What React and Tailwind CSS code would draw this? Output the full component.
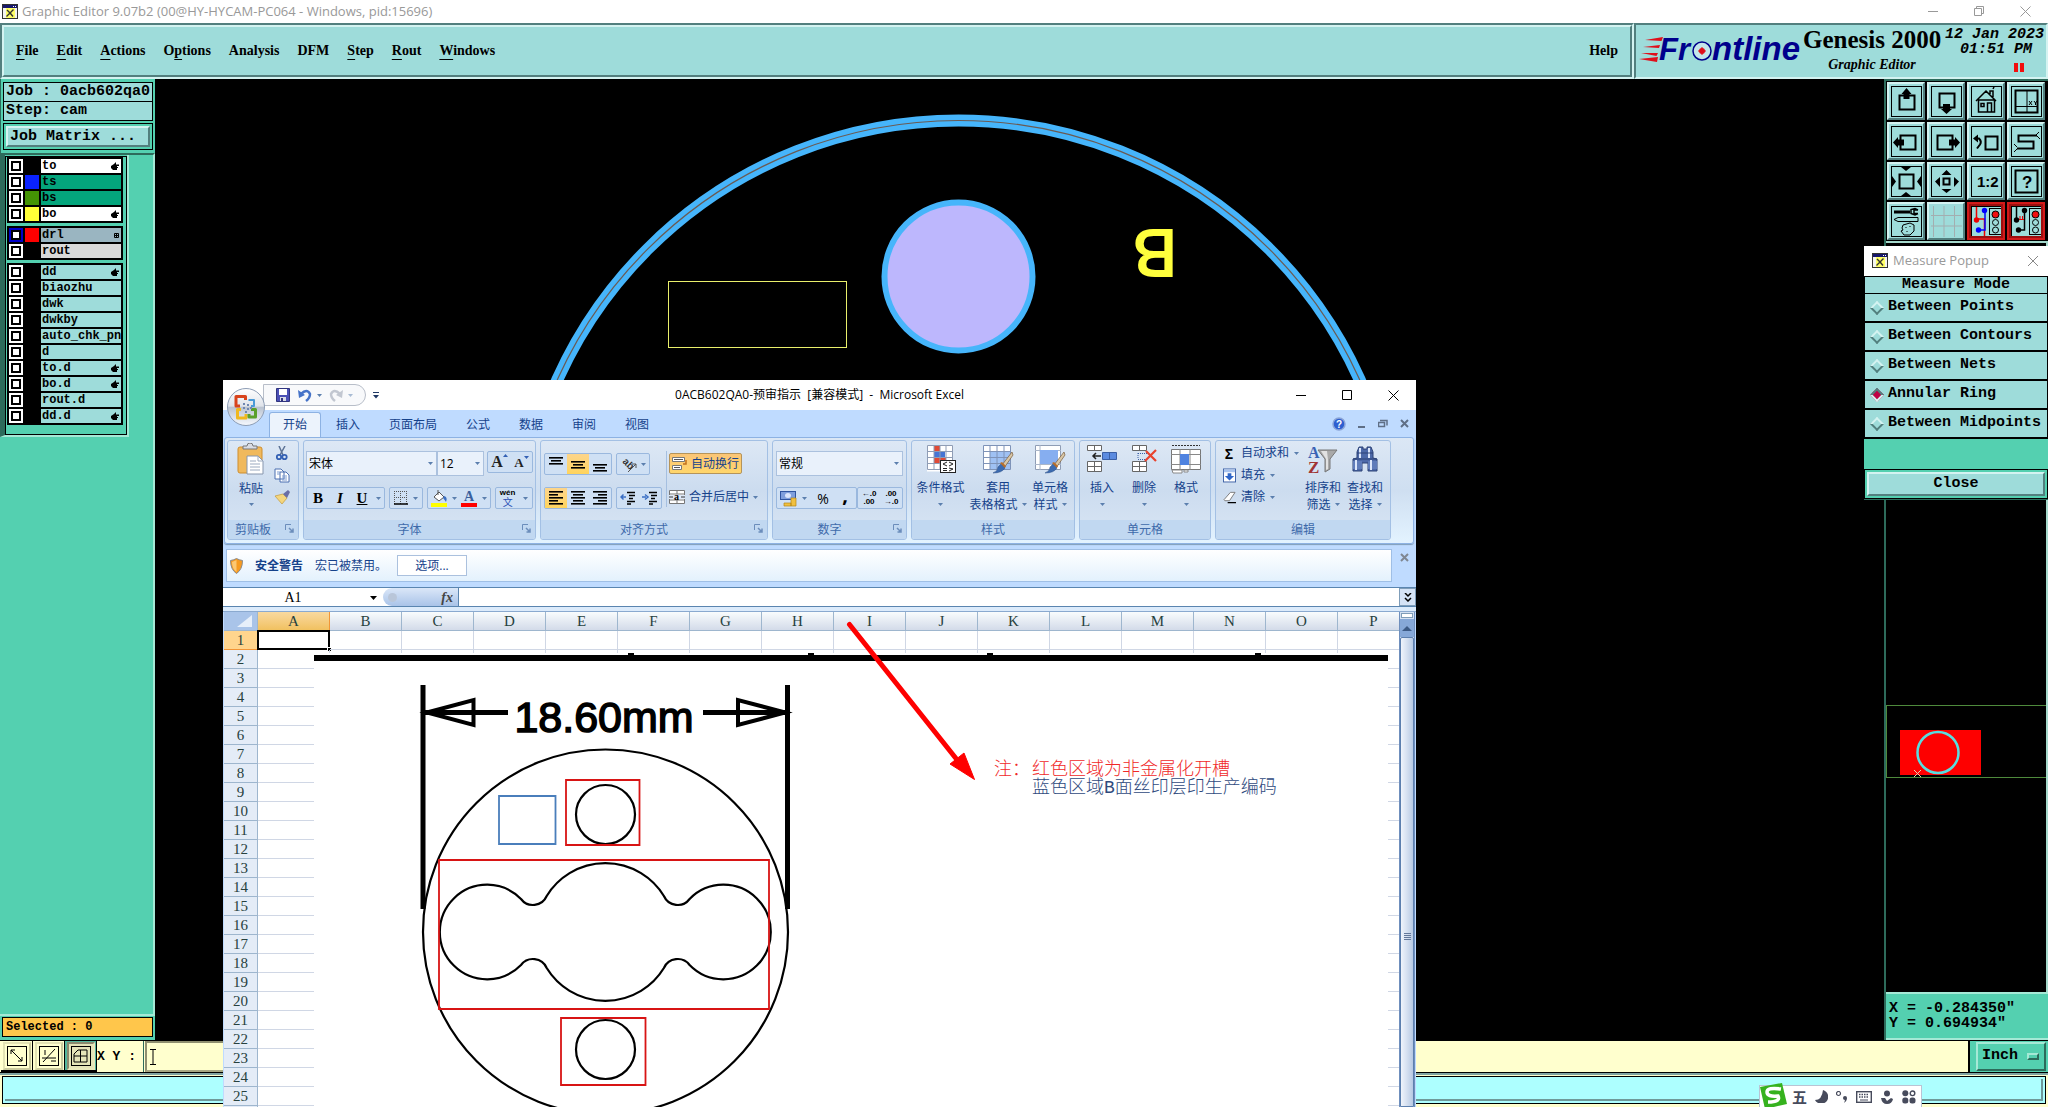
import { useState } from 'react';
import clsx from 'clsx';

const raised = 'border-2 border-t-[#d4f3f1] border-l-[#d4f3f1] border-b-[#527f7e] border-r-[#527f7e]';
const sunken = 'border-2 border-t-[#527f7e] border-l-[#527f7e] border-b-[#d4f3f1] border-r-[#d4f3f1]';

const menus = [
  ['', 'F', 'ile'],
  ['', 'E', 'dit'],
  ['', 'A', 'ctions'],
  ['O', 'p', 'tions'],
  ['Analysis', '', ''],
  ['DFM', '', ''],
  ['', 'S', 'tep'],
  ['', 'R', 'out'],
  ['', 'W', 'indows'],
];

const layerGroups = [
  [
    { name: 'to', color: 'bg-black', row: 'bg-white', hand: true },
    { name: 'ts', color: 'bg-[#0a22ff]', row: 'bg-[#04a57c]' },
    { name: 'bs', color: 'bg-[#449404]', row: 'bg-[#04a57c]' },
    { name: 'bo', color: 'bg-[#ffff38]', row: 'bg-white', hand: true },
  ],
  [
    { name: 'drl', color: 'bg-[#fe0000]', row: 'bg-[#9ab5c1]', grid: true, active: true },
    { name: 'rout', color: 'bg-black', row: 'bg-[#d9d9d9]' },
  ],
  [
    { name: 'dd', hand: true },
    { name: 'biaozhu' },
    { name: 'dwk' },
    { name: 'dwkby' },
    { name: 'auto_chk_pnl' },
    { name: 'd' },
    { name: 'to.d', hand: true },
    { name: 'bo.d', hand: true },
    { name: 'rout.d' },
    { name: 'dd.d', hand: true },
  ],
];

const measureModes = ['Between Points', 'Between Contours', 'Between Nets', 'Annular Ring', 'Between Midpoints'];
const columns = 'ABCDEFGHIJKLMNOP'.split('');
const rows = Array.from({ length: 26 }, (_, i) => i + 1);

const AppIcon = () => (
  <svg width="16" height="16" viewBox="0 0 16 16" className="shrink-0">
    <rect x="0.5" y="0.5" width="15" height="14" fill="#f3f0c8" stroke="#333" />
    <rect x="1" y="1" width="14" height="3" fill="#17176b" />
    <path d="M11 2.5h1M13 2.5h1" stroke="#fff" />
    <path d="M1 4h14v10H1z" fill="#f4f4f0" />
    <path d="M4 4h9v10H4z" fill="#ffff66" />
    <path d="M4.5 12.500L11.500 5.500M5 6l3.500 3.500L11 12.500" stroke="#333" strokeWidth="1.400" />
  </svg>
);

const Hand = () => (
  <svg width="8" height="8" viewBox="0 0 8 8">
    <path d="M0 4l3-2 2-2v2.500h3v1.500H6v1h1v1H6v2H2L0 6z" fill="#000" />
  </svg>
);

/* ---------- Genesis tool buttons, 31x31 drawings ---------- */

const tools = [
  ['Pan up', <g key="i"><path d="M8.5 9.5h15v14h-15z" fill="none" stroke="#000" strokeWidth="2" /><path d="M15.5 2l5 6h-2v5h-6V8h-2z" /></g>],
  ['Pan down', <g key="i"><path d="M8.5 7.5h15v14h-15z" fill="none" stroke="#000" strokeWidth="2" /><path d="M15.5 28l5.500-5h-2v-5h-7v5h-2z" /></g>],
  ['Home', <g key="i" fill="none" stroke="#000" strokeWidth="1.500"><path d="M5 15L15 5l10 10M7.500 14v12h16V14zM10 17.500h3v3h-3zM16.500 26v-9h4v9M19 8V5h3v6M22 3l1-2" /></g>],
  ['Zoom window', <g key="i" fill="none" stroke="#000"><rect x="4.500" y="4.500" width="22" height="22" strokeWidth="2" /><path d="M16 4v22M5 20.500h22M18 15l3 4M21 15l-3 4M23 15l1.500 2L26 15M24.500 17v2" /></g>],
  ['Pan left', <g key="i"><path d="M9.500 9.500h15v14h-15z" fill="none" stroke="#000" strokeWidth="2" /><path d="M2 16.500l5-5.500v2.500h6v6H7V22z" /></g>],
  ['Pan right', <g key="i"><path d="M6.500 9.500h15v14h-15z" fill="none" stroke="#000" strokeWidth="2" /><path d="M29 16.500L24 11v2.500h-6v6h6V22z" /></g>],
  ['Previous view', <g key="i" fill="none" stroke="#000" strokeWidth="2"><rect x="14.500" y="10.500" width="12" height="13" /><path d="M4 12.500h4q3 3 1 6l-3 4" /><path d="M2 12.500l5-4v8z" fill="#000" stroke="none" /></g>],
  ['Snake view', <g key="i" fill="none" stroke="#000"><path d="M26 9.500H7.500v6h15v7H6" strokeWidth="2" /><path d="M25 9l3-3M26 10l3 3M6 21l-3-3M6 23l-3 3" /></g>],
  ['Zoom in', <g key="i"><rect x="8.500" y="8.500" width="14" height="14" fill="none" stroke="#000" strokeWidth="2" /><path d="M15 5l-5-4h10zM15 26l-5 4h10zM5 15.500L1 10v11zM26 15.500l4-5.500v11z" /></g>],
  ['Zoom out', <g key="i"><rect x="12.500" y="12.500" width="6" height="6" fill="none" stroke="#000" strokeWidth="2" /><path d="M15.500 4l5 5h-10zM15.500 27l5-4h-10zM4 15.500L9 11v10zM28 15.500L23 11v10z" /></g>],
  ['Scale', <text key="i" x="6" y="21" fontFamily="Liberation Sans" fontWeight="bold" fontSize="15">1:2</text>],
  ['Help', <g key="i"><rect x="4.500" y="4.500" width="22" height="22" fill="none" stroke="#000" strokeWidth="2" /><text x="11" y="22" fontFamily="Liberation Sans" fontWeight="bold" fontSize="17">?</text></g>],
  ['Setup', <g key="i" fill="none" stroke="#000"><path d="M3 6h16" strokeWidth="3" /><path d="M27 4l-3-1.500-4 1v4l4 1.500 3-1.500M27 4h-4v3.500h4" strokeWidth="1.500" /><path d="M3 13.500l4-2h20v4H7z" /><path d="M12 19l7-2 4 2v6l-4 4h-6l-3-4 2-1-1-2zM15 21v1M19 20v1M16 25v1" /></g>],
  ['Grid', <g key="i" stroke="#a3aeb0" fill="none"><path d="M2.500 0v31M13 0v31M23.500 0v31M0 9.500h31M0 20h31" /></g>],
  ['Net display', <g key="i"><path d="M5.500 1v12h8v17" fill="none" stroke="#e00" strokeWidth="1.500" /><path d="M14 4v20H8" fill="none" stroke="#00f" strokeWidth="1.500" /><circle cx="5.500" cy="14" r="2.700" fill="#e00" /><circle cx="13.500" cy="4.500" r="2.700" fill="#00f" /><circle cx="7.500" cy="24" r="2.700" fill="#00f" /></g>],
  ['Net check', <g key="i"><path d="M5.500 1v12M13.500 4v20H8" fill="none" stroke="#000" strokeWidth="1.500" /><path d="M7 13.500h6M9 10v4M11.500 10v4" stroke="#e00" fill="none" /><circle cx="5.500" cy="14" r="2.700" /><circle cx="13.500" cy="4.500" r="2.700" /><circle cx="7.500" cy="24" r="2.700" /></g>],
];

const TrafficLight = () => (
  <g fill="none" stroke="#000">
    <rect x="18.500" y="2.500" width="12" height="26" />
    <circle cx="24.500" cy="8.500" r="3.500" fill="#f01010" />
    <circle cx="24.500" cy="16.500" r="3" />
    <circle cx="24.500" cy="24" r="3" />
  </g>
);

function ToolGrid() {
  return (
    <div className="grid grid-cols-4 gap-[2px] border-t-2 border-[#2d6b5b] bg-black py-[1px] pr-[3px] pl-[1px]">
      {tools.map(([label, art], i) => (
        <button
          key={label}
          aria-label={label}
          className={clsx(
            'flex h-[38px] items-center justify-center bg-[#9edcda] border-2',
            i > 13
              ? 'border-[#d21a1a] outline outline-2 -outline-offset-4 outline-[#9c0f0f]'
              : 'border-t-[#d4f3f1] border-l-[#d4f3f1] border-b-[#527f7e] border-r-[#527f7e]'
          )}
        >
          <svg width="31" height="31" viewBox="0 0 31 31" className="shrink-0">
            {i !== 13 && <rect x="0.5" y="0.5" width="30" height="30" fill="none" stroke="#000" />}
            {art}
            {i > 13 && <TrafficLight />}
          </svg>
        </button>
      ))}
    </div>
  );
}

function FrontlineLogo() {
  return (
    <svg width="162" height="34" viewBox="0 0 162 34" className="shrink-0">
      <path d="M6 5l18-3-1.500 4zM4 12l17-2-1 3zM2 18h17l-1.500 3zM0 24l19-2-1 5z" fill="#e00f1b" />
      <text x="20" y="25" fontFamily="Liberation Sans" fontWeight="bold" fontStyle="italic" fontSize="31" fill="#00008c">Fr</text>
      <circle cx="63" cy="16" r="9" fill="#c4e6ea" stroke="#00008c" strokeWidth="1.500" />
      <circle cx="63" cy="16" r="3" fill="#e00f1b" />
      <path d="M63 12v8M59 16h8" stroke="#e00f1b" />
      <text x="73" y="25" fontFamily="Liberation Sans" fontWeight="bold" fontStyle="italic" fontSize="33" fill="#00008c">ntline</text>
    </svg>
  );
}

function LayerList() {
  return (
    <div className="w-[122px] border border-black bg-[#54d0b0] pr-[3px] pb-[9px] pl-[1px]">
      <div className="flex flex-col gap-[3px]">
        {layerGroups.map((group, g) => (
          <div key={g} className="flex flex-col gap-[2px] bg-black p-[2px]">
            {group.map((layer) => (
              <label key={layer.name} className="flex h-[14px] gap-[2px]">
                <span className={clsx('flex size-[14px] items-center justify-center', layer.active ? 'bg-[#0000c8]' : 'bg-white')}>
                  <input type="checkbox" defaultChecked={layer.active} className="size-[10px] appearance-none border-2 border-black bg-white" />
                </span>
                <span className={clsx('size-[14px]', layer.color)} />
                <span className={clsx('flex min-w-0 flex-1 items-center justify-between overflow-hidden pl-[1px] pr-[2px] text-[12px] leading-[14px]', layer.row || 'bg-[#9edcda]')}>
                  <span>{layer.name}</span>
                  {layer.hand && <Hand />}
                  {layer.grid && (
                    <svg width="5" height="5" viewBox="0 0 5 5"><path d="M0.5 0.5h4v4h-4zM2.500 0v5M0 2.500h5" fill="none" stroke="#000" /></svg>
                  )}
                </span>
              </label>
            ))}
          </div>
        ))}
      </div>
    </div>
  );
}

function LeftPanel() {
  return (
    <aside className="flex w-[155px] shrink-0 flex-col bg-[#54d0b0] font-bold">
      <div className="border-l border-[#2d6b5b] px-[2px] pt-[3px] pb-[3px]">
        <div className="border border-black bg-[#9edcda] pl-[2px] text-[15px] leading-[18px]">Job : 0acb602qa0</div>
        <div className="border border-t-0 border-black bg-[#9edcda] pl-[2px] text-[15px] leading-[18px]">Step: cam</div>
        <div className="mt-[2px] border border-black p-[2px]">
          <button className={clsx(raised, 'block w-full bg-[#9edcda] pl-[2px] text-left text-[15px] leading-[17px]')}>Job Matrix ...</button>
        </div>
      </div>
      <div className="flex flex-1 flex-col items-start border-t-2 border-r-2 border-t-[#2d6b5b] border-r-[#a5e9d6]">
        <div className="border-l-[5px] border-r-2 border-b-2 border-l-[#2d6b5b] border-r-[#a5e9d6] border-b-[#a5e9d6] pt-[1px]">
          <LayerList />
        </div>
      </div>
      <div className="border-t-2 border-[#a5e9d6] px-[2px] pt-[1px] pb-[3px]">
        <div className="border border-black bg-[#ffc64b] pl-[3px] text-[12px] leading-[18px]">Selected : 0</div>
      </div>
    </aside>
  );
}

function BoardCanvas() {
  return (
    <svg className="h-full w-full" viewBox="155 79 1729 961" preserveAspectRatio="xMinYMin meet">
      <circle cx="958.500" cy="560.500" r="440" fill="none" stroke="#46b5fb" strokeWidth="12" />
      <circle cx="958.500" cy="560.500" r="440" fill="none" stroke="#6b5a52" strokeWidth="1.200" />
      <circle cx="958.500" cy="276.500" r="74" fill="#bdb7fd" stroke="#46b5fb" strokeWidth="6" />
      <rect x="668.500" y="281.500" width="178" height="66" fill="none" stroke="#e9ef6b" />
      <text transform="translate(1177 230) rotate(180)" fontFamily="Liberation Sans" fontSize="66" fill="#ffff3d" stroke="#ffff3d" strokeWidth="2">B</text>
    </svg>
  );
}

function RightPanel() {
  return (
    <aside className="flex w-[164px] shrink-0 flex-col border-l-2 border-[#2d6b5b] bg-black">
      <ToolGrid />
      <div className="flex-1 border-t-2 border-r-2 border-[#a5d9cc]">
        <svg width="160" height="600" viewBox="1886 243 160 600">
          <rect x="1886.500" y="705.500" width="161" height="72" fill="none" stroke="#4e8a3c" />
          <rect x="1900" y="730" width="81" height="45" fill="#fe0000" />
          <circle cx="1938" cy="752.500" r="20.500" fill="none" stroke="#58dde0" strokeWidth="2.500" />
          <path d="M1914 770l7 7M1921 770l-7 7" stroke="#e8d0b0" />
        </svg>
      </div>
      <div className="border-y-2 border-t-[#a5e9d6] border-b-[#a5e9d6] bg-[#54d0b0] pt-[7px] pb-[7px] pl-[3px] text-[15px] leading-[15px] font-bold whitespace-pre">
        <div>{'X = -0.284350"'}</div>
        <div>{'Y = 0.694934"'}</div>
      </div>
    </aside>
  );
}

function MeasurePopup() {
  const [mode, setMode] = useState('Annular Ring');
  return (
    <section className="absolute top-[246px] right-0 w-[184px] border-b border-[#2d6b5b] bg-[#54d0b0] text-[15px] font-bold">
      <header className="flex h-[30px] items-center justify-between bg-white pr-[9px] pl-2 font-['Open_Sans',sans-serif] text-[13px] font-normal text-[#999]">
        <span className="flex items-center gap-[5px]"><AppIcon />Measure Popup</span>
        <button aria-label="Close popup">
          <svg width="12" height="12" viewBox="0 0 12 12"><path d="M1 1l10 10M11 1L1 11" stroke="#888" /></svg>
        </button>
      </header>
      <fieldset className="flex flex-col gap-[1px] bg-black p-[1px]">
        <legend className="sr-only">Mode</legend>
        <div className="bg-[#9edcda] text-center leading-[16px]">Measure Mode</div>
        {measureModes.map((m) => (
          <label key={m} className="flex h-7 items-center gap-[6px] border-b border-black bg-[#9edcda] pl-[7px] whitespace-nowrap">
            <input
              type="radio"
              name="measure"
              checked={mode === m}
              onChange={() => setMode(m)}
              className="size-[10px] shrink-0 rotate-45 appearance-none border-2 border-t-[#d4f3f1] border-l-[#d4f3f1] border-r-[#527f7e] border-b-[#527f7e] checked:border-t-[#527f7e] checked:border-l-[#527f7e] checked:border-r-[#d4f3f1] checked:border-b-[#d4f3f1] checked:bg-[#c00045]"
            />
            {m}
          </label>
        ))}
      </fieldset>
      <div className="mt-[30px] border border-black p-[2px]">
        <button className={clsx(raised, 'block w-full bg-[#9edcda] leading-5')}>Close</button>
      </div>
    </section>
  );
}

/* ---------- Excel ---------- */

const Caret = ({ className }) => (
  <svg width="5" height="3" viewBox="0 0 5 3" className={clsx('shrink-0', className)}><path d="M0 0h5L2.500 3z" fill="#5b7fae" /></svg>
);

const box = 'flex h-[22px] items-center rounded-[2px] border border-[#9ab8de] bg-[#cfe0f4]';
const cell = 'flex h-full w-[22px] items-center justify-center';
const lit = 'bg-gradient-to-b from-[#fdd58b] to-[#ffd45c]';

function Group({ title, launcher, className, children }) {
  return (
    <section className={clsx('flex shrink-0 flex-col overflow-hidden rounded-[3px] border border-[#a3c0e4] bg-gradient-to-b from-[#dde8f5] via-[#ccdcef] to-[#d8e5f4]', className)}>
      <div className="flex h-[79px]">{children}</div>
      <h3 className={clsx('relative h-[19px] bg-[#c1d8f1] text-center leading-[19px] text-[#3e6aaa]', launcher && 'pr-[20px]')}>
        {title}
        {launcher && (
          <button aria-label={title} className="absolute top-[4px] right-[4px]">
            <svg width="9" height="9" viewBox="0 0 9 9"><path d="M0.5 6V0.500H6" fill="none" stroke="#6b8dbb" /><path d="M4 4l4 4M8 4.500V8H4.500" fill="none" stroke="#6b8dbb" strokeWidth="1.500" /></svg>
          </button>
        )}
      </h3>
    </section>
  );
}

function Combo({ label, value, className }) {
  return (
    <span className={clsx('relative flex', className)}>
      <select aria-label={label} className="h-[25px] w-full appearance-none border border-[#abc1de] bg-[#e9f1fb] pl-[2px] text-[12px] text-black">
        <option>{value}</option>
      </select>
      <Caret className="pointer-events-none absolute top-[11px] right-[4px]" />
    </span>
  );
}

const Lines = ({ y, w }) => (
  <svg width="16" height="16" viewBox="0 0 16 16">
    {w.map((v, i) => {
      const x = v < 0 ? 15 + v : v === 10 ? 3 : 1;
      return <rect key={i} x={x} y={y + i * 3} width={Math.abs(v)} height="1.600" fill="#000" />;
    })}
  </svg>
);

const Indent = ({ flip }) => (
  <svg width="16" height="14" viewBox="0 0 16 14">
    <path d="M7 1.500h8M9 4.500h6M9 7.500h4M7 10.500h8M7 13h4" stroke="#000" strokeWidth="1.500" />
    <path d={flip ? 'M0 6h4M3 3.500L6 6 3 8.500' : 'M6 6H2M3.500 3.500L1 6l2.500 2.500'} stroke="#3b6fc4" strokeWidth="1.500" fill="none" />
  </svg>
);

const Cells = ({ children }) => (
  <svg width="32" height="30" viewBox="0 0 32 30">{children}</svg>
);

const Brush = () => (
  <g>
    <path d="M30 8L20 21l2 3L31 11z" fill="#d8c7a8" stroke="#7a5a36" strokeWidth="0.700" />
    <path d="M19 20l4 4q-3 5-12 5 5-2 5-6z" fill="#3c6bb0" stroke="#2b4e86" strokeWidth="0.500" />
    <path d="M18 19l5 5 1-2-4-4z" fill="#b86f2c" />
  </g>
);

const CondFormat = () => (
  <Cells>
    <path d="M2 1.500h26v26H2z" fill="#fff" />
    <path d="M9 1h6v6H9zM9 13h12v6H9z" fill="#e04a36" />
    <path d="M9 7h11v6H9z" fill="#4675d4" />
    <path d="M2.500 1.500h25v24h-25zM9 1v25M15 1v25M21 1v25M2 7.500h26M2 13.500h26M2 19.500h26" fill="none" stroke="#8f9db5" />
    <rect x="15.500" y="16.500" width="15" height="12" fill="#fff" stroke="#222" />
    <path d="M22 18l-4 2 4 2M24 18l4 2-4 2M18 24.500h4M18 26.500h4M24 24l4 1-4 2" stroke="#222" fill="none" />
  </Cells>
);

const TableFormat = () => (
  <Cells>
    <path d="M1.500 1.500h27v24h-27z" fill="#fff" />
    <path d="M8 7h20v18H8z" fill="#9fc1f3" />
    <path d="M1.500 1.500h27v24h-27zM8 1v25M15 1v25M22 1v25M1 7.500h28M1 13.500h28M1 19.500h28" fill="none" stroke="#7e93b8" />
    <Brush />
  </Cells>
);

const CellStyle = () => (
  <Cells>
    <path d="M1.500 1.500h25v24h-25z" fill="#fff" stroke="#8f9db5" />
    <path d="M6 1v25M1 6.500h26M1 20.500h26" stroke="#aab6c9" />
    <path d="M6 6h18v14H6z" fill="#86aef0" />
    <Brush />
  </Cells>
);

const InsertCells = () => (
  <Cells>
    <path d="M1.500 1.500h14v5h-14zM8.500 1v5M1.500 17.500h14v10h-14zM8.500 17v10M1 22.500h14" fill="#fff" stroke="#666" />
    <path d="M16.500 8.500h14v7h-14z" fill="#5b8be0" stroke="#3a5fa5" />
    <path d="M23.500 8v7" stroke="#3a5fa5" />
    <path d="M15 12H8M10 9l-3 3 3 3" stroke="#222" fill="none" strokeWidth="1.500" />
  </Cells>
);

const DeleteCells = () => (
  <Cells>
    <path d="M4.500 1.500h14v5h-14zM11.500 1v5M4.500 17.500h14v10h-14zM11.500 17v10M4 22.500h14" fill="#fff" stroke="#666" />
    <path d="M10 9.500h10M10 15.500h10M10 9v6" stroke="#3a5fa5" strokeDasharray="1 1" />
    <path d="M18 7l10 10M28 6L17 17" stroke="#e8432e" strokeWidth="2.200" />
  </Cells>
);

const FormatCells = () => (
  <Cells>
    <path d="M1.500 5.500h29v20h-29z" fill="#fff" stroke="#777" />
    <path d="M10 5v21M20 5v21M1 10.500h30M1 20.500h30" stroke="#888" />
    <path d="M10 10h9v11h-9z" fill="#4f83e0" />
    <path d="M2 1.500h28" stroke="#333" strokeDasharray="2 1" />
    <path d="M2 26h10v3H3zM14 26h4v2h-4z" fill="#fff" stroke="#888" />
  </Cells>
);

const SortFilter = () => (
  <Cells>
    <text x="1" y="14" fontFamily="Liberation Serif" fontWeight="bold" fontSize="16" fill="#3a63b5">A</text>
    <text x="1" y="29" fontFamily="Liberation Serif" fontWeight="bold" fontSize="17" fill="#a03434">Z</text>
    <path d="M11 6h19l-7 9v10l-5 3V15z" fill="#a9a9a9" stroke="#777" />
    <path d="M14 7h6l1 9v9l-2 1V15z" fill="#e2e2e2" />
  </Cells>
);

const Binoculars = () => (
  <Cells>
    <path d="M10 3h4v2h4V3h4l2 5v6l4 1v12h-9v-8h-6v8H4V15l4-1V8z" fill="#4d69a8" stroke="#2c4276" />
    <path d="M4 17h9v8H4zM19 17h9v8h-9z" fill="#5f7cba" />
    <path d="M6 16h2v10H6zM21 16h2v10h-2zM10 4h2v10h-2zM19 4h2v10h-2z" fill="#dbe6fb" />
    <path d="M8 9h16M4 15h24" stroke="#2c4276" />
  </Cells>
);

function BigButton({ icon, lines, className }) {
  return (
    <button className={clsx('flex flex-col items-center pt-[3px] text-[#15428b]', className)}>
      {icon}
      <span className="mt-[5px] leading-[17px] whitespace-nowrap">{lines[0]}</span>
      <span className="flex h-[17px] items-center gap-1 leading-[17px] whitespace-nowrap">
        {lines[1]}
        <Caret />
      </span>
    </button>
  );
}

function SmallButton({ icon, children }) {
  return (
    <button className="flex h-[22px] items-center gap-[5px] whitespace-nowrap text-[#15428b]">
      <svg width="13" height="16" viewBox="0 0 14 16">{icon}</svg>
      {children}
      <Caret />
    </button>
  );
}

function Ribbon() {
  return (
    <div className="flex gap-[4px] rounded-[3px] border border-[#8db2e3] bg-gradient-to-b from-[#dbe7f5] via-[#cfdff1] to-[#e3f3ff] px-[2px] pt-[2px] pb-[3px] shadow-[0_1px_1px_#7f9db9]">
      <Group title="剪贴板" launcher className="w-[72px]">
        <button className="flex w-[46px] flex-col items-center pt-[2px] text-[#15428b]">
          <svg width="28" height="32" viewBox="0 0 28 32">
            <rect x="1" y="4" width="24" height="26" rx="2" fill="#f0b95c" stroke="#cf8d2c" />
            <path d="M6 6h14V3h-4a3 3 0 0 0-6 0H6z" fill="#d8dce4" stroke="#777" />
            <path d="M10 13h11l5 5v13H10z" fill="#fff" stroke="#8796ad" />
            <path d="M21 13v5h5M13 18h6M13 21h10M13 24h10M13 27h10" fill="none" stroke="#9aa9bf" />
          </svg>
          <span className="mt-[5px] leading-[18px]">粘贴</span>
          <Caret className="mt-[5px]" />
        </button>
        <div className="flex flex-col gap-[7px] pt-[5px]">
          <button aria-label="剪切"><svg width="16" height="15" viewBox="0 0 16 15"><path d="M5 0l4 9M11 0L6 9" stroke="#5d7396" strokeWidth="1.500" /><circle cx="5" cy="11" r="2.200" fill="none" stroke="#3360b4" strokeWidth="1.800" /><circle cx="10.500" cy="11" r="2.200" fill="none" stroke="#3360b4" strokeWidth="1.800" /></svg></button>
          <button aria-label="复制"><svg width="16" height="15" viewBox="0 0 16 15"><path d="M1 1h6l3 3v7H1zM6 4h6l3 3v7H6z" fill="#fff" stroke="#4a6fb0" /><path d="M3 4h3M3 6h3M8 8h5M8 10h5M8 12h5" stroke="#7f9dd0" /></svg></button>
          <button aria-label="格式刷"><svg width="16" height="15" viewBox="0 0 16 15"><path d="M1 6l8-2 4 4-5 6z" fill="#f4d67e" stroke="#c39a3a" strokeWidth="0.700" /><path d="M9 4l5-4 2 2-3 6z" fill="#6a6fa6" /></svg></button>
        </div>
      </Group>

      <Group title="字体" launcher className="w-[233px]">
        <div className="flex flex-1 flex-col gap-[11px] px-[2px] pt-[10px]">
          <div className="flex">
            <Combo label="字体" value="宋体" className="w-[131px]" />
            <Combo label="字号" value="12" className="w-[47px]" />
            <div className={clsx(box, 'ml-[3px] flex-1 justify-around font-["Liberation_Serif",serif] font-bold text-[#222]')}>
              <button aria-label="增大字号" className="flex items-start text-[16px] leading-none">A<svg width="5" height="3" viewBox="0 0 5 3"><path d="M0 3h5L2.500 0z" fill="#3360b4" /></svg></button>
              <button aria-label="减小字号" className="flex items-start text-[13px] leading-none">A<svg width="5" height="3" viewBox="0 0 5 3"><path d="M0 0h5L2.500 3z" fill="#3360b4" /></svg></button>
            </div>
          </div>
          <div className="flex gap-[4px]">
            <div className={clsx(box, 'font-["Liberation_Serif",serif] text-[15px] font-bold text-black')}>
              <button className={cell}>B</button>
              <button className={clsx(cell, 'italic')}>I</button>
              <button className={clsx(cell, 'underline')}>U</button>
              <Caret className="mx-[3px]" />
            </div>
            <div className={clsx(box, 'gap-[5px] px-[4px]')}>
              <svg width="14" height="14" viewBox="0 0 14 14"><path d="M0.500 0v13M6.500 0v13M12.500 0v13M0 0.500h13M0 6.500h13" stroke="#555" strokeDasharray="1 1" /><path d="M0 13h14" stroke="#000" strokeWidth="1.500" /></svg>
              <Caret />
            </div>
            <div className={clsx(box, 'gap-[4px] px-[3px]')}>
              <svg width="17" height="17" viewBox="0 0 17 17"><path d="M3 7l5-5 5 5-5 4z" fill="#fff" stroke="#555" /><path d="M13 6q4 1 2 6-2-3-3-4z" fill="#3b6fc4" /><path d="M7 0v5" stroke="#555" /><rect y="13" width="16" height="4" fill="#ff0" /></svg>
              <Caret />
              <svg width="17" height="17" viewBox="0 0 17 17"><text x="3" y="11" fontFamily="Liberation Serif" fontWeight="bold" fontSize="14" fill="#3a5f9d">A</text><rect y="13" width="16" height="4" fill="#f00" /></svg>
              <Caret />
            </div>
            <div className={clsx(box, 'flex-1 justify-around')}>
              <button className="flex flex-col items-center">
                <span className="font-['Liberation_Sans',sans-serif] text-[8px] leading-[8px] font-bold">wén</span>
                <span className="text-[10px] leading-[11px] text-[#2b4fb5]">文</span>
              </button>
              <Caret />
            </div>
          </div>
        </div>
      </Group>

      <Group title="对齐方式" launcher className="w-[228px]">
        <div className="flex flex-col gap-[12px] pt-[12px] pl-[3px]">
          <div className="flex gap-[4px]">
            <div className={box}>
              <button aria-label="顶端对齐" className={cell}><Lines y={1} w={[14, 10, 14]} /></button>
              <button aria-label="垂直居中" className={clsx(cell, lit)}><Lines y={5} w={[14, 10, 14]} /></button>
              <button aria-label="底端对齐" className={cell}><Lines y={8} w={[14, 10, 14]} /></button>
            </div>
            <div className={clsx(box, 'gap-[3px] px-[3px]')}>
              <svg width="18" height="18" viewBox="0 0 18 18"><text transform="translate(2 7) rotate(45)" fontFamily="Liberation Sans" fontWeight="bold" fontSize="10" fill="#333">ab</text><path d="M8 17l8-8M12 9h4v4" stroke="#555" fill="none" /></svg>
              <Caret />
            </div>
          </div>
          <div className="flex gap-[4px]">
            <div className={box}>
              <button aria-label="左对齐" className={clsx(cell, lit)}><Lines y={1} w={[14, 9, 14, 9, 14]} /></button>
              <button aria-label="居中" className={cell}><Lines y={1} w={[14, 10, 14, 10, 14]} /></button>
              <button aria-label="右对齐" className={cell}><Lines y={1} w={[-14, -9, -14, -9, -14]} /></button>
            </div>
            <div className={box}>
              <button aria-label="减少缩进量" className={cell}><Indent /></button>
              <button aria-label="增加缩进量" className={cell}><Indent flip /></button>
            </div>
          </div>
        </div>
        <div className="mt-[10px] ml-[4px] h-[56px] border-l border-[#a5bfe0]" />
        <div className="flex flex-col items-start gap-[12px] pt-[12px] pl-[2px] text-[#15428b]">
          <button className="flex h-[21px] items-center gap-[3px] rounded-[2px] border border-[#b5945a] bg-gradient-to-b from-[#fbc576] to-[#ffd66b] px-[2px] whitespace-nowrap">
            <svg width="16" height="16" viewBox="0 0 16 16"><path d="M0.500 1.500h12v4h-12zM0.500 9.500h9v4h-9z" fill="#fff" stroke="#777" /><path d="M2 3.500h9M2 11.500h6" stroke="#555" /><path d="M14 4v4h-3" fill="none" stroke="#c0701c" strokeWidth="1.500" /></svg>
            自动换行
          </button>
          <button className="flex h-[22px] items-center gap-[4px] whitespace-nowrap">
            <svg width="16" height="14" viewBox="0 0 16 14"><path d="M0.500 0.500h15v13h-15zM0 4h16M0 10h16M8 0v4M8 10v4" fill="#fff" stroke="#777" /><path d="M0 5h16v4H0z" fill="#dfe9f8" /><text x="5" y="10" fontFamily="Liberation Serif" fontWeight="bold" fontSize="10">a</text><path d="M0 7h4M12 7h4" stroke="#333" /></svg>
            合并后居中
            <Caret />
          </button>
        </div>
      </Group>

      <Group title="数字" launcher className="w-[135px]">
        <div className="flex flex-1 flex-col gap-[11px] px-[3px] pt-[10px]">
          <Combo label="数字格式" value="常规" />
          <div className="flex justify-between text-black">
            <div className={clsx(box, 'pl-[3px]')}>
              <svg width="17" height="17" viewBox="0 0 17 17"><rect x="0.500" y="1.500" width="15" height="8" fill="#7f9fdc" stroke="#2f55a0" /><ellipse cx="8" cy="5.500" rx="3" ry="2.500" fill="#dbe6fb" /><path d="M11 8h5v8h-5zM4 13h7v3H4z" fill="#f0c040" stroke="#b58516" strokeWidth="0.700" /></svg>
              <Caret className="mx-[5px]" />
              <button className={clsx(cell, 'text-[14px]')}>%</button>
              <button className={clsx(cell, 'pb-[6px] text-[20px] font-bold')}>,</button>
            </div>
            <div className={clsx(box, 'font-["Liberation_Sans",sans-serif] text-[8px] leading-[8px] font-bold')}>
              <button className={cell}>←.0<br />.00</button>
              <button className={cell}>.00<br />→.0</button>
            </div>
          </div>
        </div>
      </Group>

      <Group title="样式" className="w-[164px]">
        <BigButton icon={<CondFormat />} lines={['条件格式', '']} className="w-[57px]" />
        <BigButton icon={<TableFormat />} lines={['套用', '表格格式']} className="w-[58px]" />
        <BigButton icon={<CellStyle />} lines={['单元格', '样式']} className="w-[46px]" />
      </Group>

      <Group title="单元格" className="w-[132px]">
        <BigButton icon={<InsertCells />} lines={['插入', '']} className="w-[44px]" />
        <BigButton icon={<DeleteCells />} lines={['删除', '']} className="w-[40px]" />
        <BigButton icon={<FormatCells />} lines={['格式', '']} className="w-[44px]" />
      </Group>

      <Group title="编辑" className="w-[176px]">
        <div className="flex w-[86px] shrink-0 flex-col pt-[1px] pl-[7px]">
          <SmallButton icon={<text x="2" y="14" fontFamily="Liberation Sans" fontWeight="bold" fontSize="15">Σ</text>}>自动求和</SmallButton>
          <SmallButton icon={<g><rect x="0.500" y="1.500" width="13" height="14" fill="#fff" stroke="#3a5fa5" /><path d="M1 2h12v3H1z" fill="#a9c4ee" /><path d="M5 6h4v3h3l-5 5-5-5h3z" fill="#2f66c8" /></g>}>填充</SmallButton>
          <SmallButton icon={<g><path d="M1 11l7-8h5l-6 9H2z" fill="#fff" stroke="#777" /><path d="M5 14h9" stroke="#000" strokeWidth="1.500" /></g>}>清除</SmallButton>
        </div>
        <BigButton icon={<SortFilter />} lines={['排序和', '筛选']} className="w-[42px]" />
        <BigButton icon={<Binoculars />} lines={['查找和', '选择']} className="w-[42px]" />
      </Group>
    </div>
  );
}

function Drawing() {
  return (
    <svg className="pointer-events-none absolute top-0 left-0" width="1175" height="496" viewBox="224 611 1175 496">
      <rect x="314" y="652" width="1074" height="456" fill="#fff" />
      <path d="M314 654h1074v6H314zM628 652h6v3h-6zM808 652h6v3h-6zM987 652h6v3h-6zM1255 652h6v3h-6z" />
      <g fill="none" stroke="#000">
        <path d="M423 684v224M787.500 684v224" strokeWidth="5" />
        <path d="M425 711.500h83M703 711.500h84" strokeWidth="5" />
        <path d="M427 711.500l46.500-12.500v25zM785 711.500L738 699v25z" strokeWidth="4" />
        <circle cx="605.500" cy="931" r="182.500" strokeWidth="2.200" />
        <circle cx="605.500" cy="813.500" r="29.500" strokeWidth="2.200" />
        <circle cx="605.500" cy="1048.500" r="29.500" strokeWidth="2.200" />
        <path d="M521 898A15 15 0 0 0 546.700 895A68.700 68.700 0 0 1 663.900 895A15 15 0 0 0 689.600 898A47.300 47.300 0 1 1 689.600 964A15 15 0 0 0 663.900 967A68.700 68.700 0 0 1 546.700 967A15 15 0 0 0 521 964A47.300 47.300 0 1 1 521 898Z" strokeWidth="2.200" />
      </g>
      <text x="604" y="731" textAnchor="middle" fontFamily="Liberation Sans" fontSize="43" stroke="#000" strokeWidth="1.500">18.60mm</text>
      <g fill="none" stroke="#d81414" strokeWidth="1.800">
        <path d="M566 779h73.500v65H566zM439 859h330v149H439zM561 1017h84.500v67H561z" />
        <path d="M499 795h56.500v48H499z" stroke="#4a7ebb" />
      </g>
      <path d="M849.500 623.500L958 760" stroke="#fe0000" strokeWidth="5" strokeLinecap="round" />
      <path d="M974.500 778.500L950 763l14-11z" fill="#fe0000" stroke="#fe0000" />
      <g fontFamily="Liberation Mono, Noto Sans CJK SC, monospace" fontSize="18" fontWeight="300">
        <text x="994" y="774" fill="#f02828">注：</text>
        <text x="1032" y="774" fill="#f02828">红色区域为非金属化开槽</text>
        <text x="1032" y="792" fill="#2f4a7d">蓝色区域B面丝印层印生产编码</text>
      </g>
    </svg>
  );
}

function Sheet() {
  return (
    <div className="flex min-h-0 min-w-0 flex-1">
      <div className="relative min-w-0 flex-1 overflow-hidden bg-white">
        <table className="w-[1186px] table-fixed border-separate border-spacing-0 font-['Liberation_Serif',serif] text-[15px] leading-[17px] text-[#27413e]">
          <thead>
            <tr className="h-[19px]">
              <th className="w-[34px] border-r border-b border-[#9eb6ce] bg-[#a9c4e9] p-0">
                <svg width="33" height="18" viewBox="0 0 33 18" className="block"><path d="M28 3v12H13z" fill="#e6effa" /></svg>
              </th>
              {columns.map((c) => (
                <th key={c} className={clsx('w-[72px] border-r border-b p-0 font-normal', c === 'A' ? 'border-[#f29536] bg-gradient-to-b from-[#f9d99f] to-[#f1c15f]' : 'border-[#9eb6ce] bg-gradient-to-b from-[#f9fcfd] to-[#d3dbe9]')}>{c}</th>
              ))}
            </tr>
          </thead>
          <tbody>
            {rows.map((r) => (
              <tr key={r} className="h-[19px]">
                <th className={clsx('border-r border-b p-0 font-normal', r === 1 ? 'border-[#f29536] bg-[#ffd58d]' : 'border-[#9eb6ce] bg-[#e4ecf7]')}>{r}</th>
                {columns.map((c) => (
                  <td key={c} className="relative border-r border-b border-[#d0d7e5] p-0">
                    {r === 1 && c === 'A' && (
                      <span className="absolute -inset-[1px] border-2 border-black">
                        <i className="absolute -right-[4px] -bottom-[4px] size-[5px] border border-white bg-black" />
                      </span>
                    )}
                  </td>
                ))}
              </tr>
            ))}
          </tbody>
        </table>
        <Drawing />
      </div>
      <div className="flex w-[16px] shrink-0 flex-col border-x border-[#6f8fbd] bg-[#d3e0f2]">
        <div className="m-[1px] h-[5px] border border-[#7f9db9] bg-white" />
        <button aria-label="向上滚动" className="flex h-[18px] items-center justify-center bg-[#86a8d8]">
          <svg width="10" height="5" viewBox="0 0 10 5"><path d="M0 5h10L5 0z" fill="#3c5a85" /></svg>
        </button>
        <div className="flex flex-1 items-center justify-center rounded-t-[2px] border border-[#5c7fae] bg-gradient-to-r from-[#f0f4fb] via-[#d5e0f0] to-[#b7c9e3] pt-[130px]">
          <svg width="7" height="8" viewBox="0 0 7 8"><path d="M0 0.500h7M0 2.500h7M0 4.500h7M0 6.500h7" stroke="#64789a" /></svg>
        </div>
      </div>
    </div>
  );
}

function OfficeButton() {
  return (
    <button aria-label="Office 按钮" className="absolute top-[7px] left-[3px]">
      <svg width="40" height="40" viewBox="0 0 40 40">
        <defs>
          <linearGradient id="orb" x1="0" y1="0" x2="0" y2="1">
            <stop offset="0" stopColor="#fff" />
            <stop offset="0.480" stopColor="#dfe3ea" />
            <stop offset="0.500" stopColor="#b9c2d0" />
            <stop offset="1" stopColor="#f6f9fe" />
          </linearGradient>
        </defs>
        <circle cx="20" cy="20" r="18.500" fill="url(#orb)" stroke="#8d9db5" />
        <g fill="none" strokeWidth="3" strokeLinejoin="round">
          <path d="M14 19h-4V9.500h9.500V13" stroke="#d8431c" />
          <path d="M22.500 13H28v6h-3" stroke="#4b9bd8" strokeWidth="2" />
          <path d="M15 22.500h-3.500V31H20v-4" stroke="#f0b81e" />
          <path d="M25 22.500h4.500V30H23v-3" stroke="#5aa02c" />
        </g>
        <path d="M17 20h2v2h-2zM21 17h2v2h-2zM17 16h2v2h-2zM21 21h2v2h-2zM19 24h2v2h-2zM24 20h2v2h-2z" fill="#6f86b0" />
      </svg>
    </button>
  );
}

function Excel() {
  const tabs = ['开始', '插入', '页面布局', '公式', '数据', '审阅', '视图'];
  return (
    <section className="absolute top-[380px] bottom-0 left-[223px] flex w-[1193px] flex-col overflow-hidden bg-[#bfdbff] font-['Open_Sans','Noto_Sans_CJK_SC',sans-serif] text-[12px]">
      <header className="flex h-[30px] shrink-0 items-center bg-white">
        <div className="flex flex-1 items-center">
          <div className="ml-[40px] flex h-[22px] w-[103px] items-center gap-[4px] rounded-r-full border border-[#b8bec9] bg-[#f8f9fb] pl-[12px]">
            <button aria-label="保存"><svg width="14" height="14" viewBox="0 0 14 14"><path d="M0.500 0.500h13v13h-13z" fill="#4a4fb5" stroke="#30347f" /><path d="M3 1h8v6H3z" fill="#fff" /><path d="M4 9h6v4H4z" fill="#d9dbe6" /><path d="M5 10h2v3H5z" fill="#30347f" /></svg></button>
            <button aria-label="撤消" className="ml-[4px] flex items-center gap-[5px]"><svg width="14" height="14" viewBox="0 0 14 14"><path d="M3 6q6-6 9 0 0 4-4 7" fill="none" stroke="#4673c8" strokeWidth="2.500" /><path d="M0 2l1 8 6-3z" fill="#4673c8" /></svg><Caret /></button>
            <button aria-label="恢复" className="ml-[3px] flex items-center gap-[5px] opacity-50"><svg width="14" height="14" viewBox="0 0 14 14"><path d="M11 6Q5 0 2 6q0 4 4 7" fill="none" stroke="#8d97a8" strokeWidth="2.500" /><path d="M14 2l-1 8-6-3z" fill="#8d97a8" /></svg><Caret /></button>
          </div>
          <button aria-label="自定义快速访问工具栏" className="ml-[7px]"><svg width="6" height="7" viewBox="0 0 6 7"><path d="M0 0.500h6" stroke="#1f3864" /><path d="M0 3h6L3 6.500z" fill="#1f3864" /></svg></button>
        </div>
        <h1 className="whitespace-pre text-black">0ACB602QA0-预审指示  [兼容模式]  -  Microsoft Excel</h1>
        <div className="flex flex-1 justify-end">
          <button aria-label="最小化" className="flex w-[46px] justify-center"><svg width="11" height="11" viewBox="0 0 11 11"><path d="M0 5.500h10" stroke="#000" /></svg></button>
          <button aria-label="最大化" className="flex w-[46px] justify-center"><svg width="11" height="11" viewBox="0 0 11 11"><path d="M0.500 0.500h9v9h-9z" fill="none" stroke="#000" /></svg></button>
          <button aria-label="关闭" className="flex w-[46px] justify-center"><svg width="11" height="11" viewBox="0 0 11 11"><path d="M0.500 0.500l10 10M10.500 0.500l-10 10" stroke="#000" /></svg></button>
        </div>
      </header>
      <nav className="flex h-[27px] shrink-0 items-end justify-between pr-[7px] pl-[46px]">
        <div className="flex gap-[1px]">
          {tabs.map((t, i) => (
            <button key={t} className={clsx('h-[25px] px-[14px] leading-[22px] text-[#15428b]', i === 0 && 'rounded-t-[3px] border border-b-0 border-[#8db2e3] bg-[#ecf3fc] !px-[13px]')}>{t}</button>
          ))}
        </div>
        <div className="flex h-full items-center gap-[12px] text-[#5f6f86]">
          <button aria-label="帮助"><svg width="14" height="14" viewBox="0 0 14 14"><circle cx="7" cy="7" r="6" fill="#2e5fd0" stroke="#8aa4d8" strokeWidth="1.500" /><text x="4" y="11" fontFamily="Liberation Sans" fontWeight="bold" fontSize="10" fill="#fff">?</text></svg></button>
          <svg width="8" height="9" viewBox="0 0 8 9"><path d="M0 8h7" stroke="currentColor" strokeWidth="2" /></svg>
          <svg width="10" height="9" viewBox="0 0 10 9"><path d="M0.500 3.500h6v4h-6zM2 1.500h7v5" fill="none" stroke="currentColor" strokeWidth="1.500" /></svg>
          <svg width="9" height="9" viewBox="0 0 9 9"><path d="M1 1l7 7M8 1L1 8" stroke="currentColor" strokeWidth="2" /></svg>
        </div>
      </nav>
      <OfficeButton />
      <div className="shrink-0 pr-[2px] pl-[1px]"><Ribbon /></div>
      <div className="flex shrink-0 items-start pt-[5px] pr-[7px] pb-[5px] pl-[3px]">
        <div className="flex h-[33px] flex-1 items-center border border-[#9fbfe6] bg-gradient-to-b from-white to-[#e3f1fd] pl-[3px] text-[#15428b]">
          <svg width="13" height="16" viewBox="0 0 13 16"><path d="M6.500 0.500Q9 2 12.500 2.500q0 9-6 13-6-4-6-13Q4 2 6.500 0.500z" fill="#f79a1f" stroke="#8a8a8a" /><path d="M6.500 2v12Q2 11 2 4z" fill="#fcc873" /></svg>
          <strong className="ml-[12px]">安全警告</strong>
          <span className="ml-[12px] w-[82px] whitespace-nowrap">宏已被禁用。</span>
          <button className="h-[21px] w-[70px] border border-[#abc1de] bg-white">选项...</button>
        </div>
        <button aria-label="关闭消息栏" className="mt-[4px] ml-[8px]"><svg width="9" height="9" viewBox="0 0 9 9"><path d="M1 1l7 7M8 1L1 8" stroke="#7f8792" strokeWidth="2" /></svg></button>
      </div>
      <div className="flex h-[20px] shrink-0 border-y border-[#5a85b0] bg-white">
        <input aria-label="名称框" defaultValue="A1" className="w-[140px] bg-white text-center font-['Liberation_Serif',serif] text-[14px]" />
        <svg width="20" height="18" viewBox="0 0 20 18"><path d="M7 8h7l-3.500 4z" /></svg>
        <div className="flex w-[76px] items-center justify-between rounded-l-full border-r border-[#5a85b0] bg-gradient-to-b from-[#dbe7f8] to-[#a9c3e8] pr-[5px] pl-[5px]">
          <span className="size-[9px] rounded-full bg-[#b9c6d9]" />
          <em className="font-['Liberation_Serif',serif] text-[14px] font-bold text-[#444]">fx</em>
        </div>
        <input aria-label="编辑栏" className="min-w-0 flex-1 bg-white" />
        <button aria-label="展开编辑栏" className="flex w-[17px] items-center justify-center border border-[#7f9db9] bg-[#d5e3f6]"><svg width="8" height="9" viewBox="0 0 8 9"><path d="M1 0l3 3 3-3M1 5l3 3 3-3" fill="none" stroke="#000" strokeWidth="1.500" /></svg></button>
      </div>
      <div className="h-[5px] shrink-0 border-b border-[#8aa9cf] bg-[#dcebfb]" />
      <div className="flex min-h-0 flex-1 pr-[1px] pl-[1px]"><Sheet /></div>
    </section>
  );
}

function ImeBar() {
  return (
    <div className="absolute right-[126px] bottom-0 flex h-[22px] items-center gap-[8px] border border-b-0 border-[#b9c4d4] bg-white pr-[5px] pl-[32px] text-[#474b5c]">
      <svg width="29" height="26" viewBox="0 0 29 26" className="absolute -top-[4px] -left-[1px]">
        <path d="M1 5L23 1l5 21-22 5z" fill="#36b21e" />
        <path d="M22 7Q8 5 8 10t11 4q3 6-10 6" fill="none" stroke="#fff" strokeWidth="3.500" />
      </svg>
      <span className="font-['Noto_Sans_CJK_SC',sans-serif] text-[15px] leading-[20px] font-bold">五</span>
      <svg width="13" height="13" viewBox="0 0 13 13"><path d="M8 0a7 7 0 1 1-8 10q7 0 8-10z" fill="currentColor" /></svg>
      <svg width="12" height="12" viewBox="0 0 12 12"><circle cx="2.500" cy="2.500" r="2" fill="none" stroke="currentColor" strokeWidth="1.200" /><circle cx="9" cy="7" r="2" fill="currentColor" /><path d="M11 7q0 3-3 5 1-2 1-4z" fill="currentColor" /></svg>
      <svg width="16" height="12" viewBox="0 0 16 12"><rect x="0.700" y="0.700" width="14.600" height="10.600" fill="none" stroke="currentColor" strokeWidth="1.400" /><path d="M3 3.500h10M3 6h10" stroke="currentColor" strokeWidth="1.500" strokeDasharray="1.500 1" /><path d="M4 9h8" stroke="currentColor" /></svg>
      <svg width="14" height="14" viewBox="0 0 14 14"><circle cx="7" cy="3.500" r="3" fill="currentColor" /><path d="M1 8h4l2 3 4-3 2 1q-1 5-6 5T1 8z" fill="currentColor" /></svg>
      <svg width="14" height="14" viewBox="0 0 14 14" fill="currentColor"><circle cx="3.300" cy="3.300" r="3" /><rect x="0.300" y="7.500" width="6" height="6" rx="2.500" /><rect x="7.500" y="7.500" width="6" height="6" rx="2.500" /><circle cx="10.500" cy="3.300" r="2.300" fill="none" stroke="currentColor" strokeWidth="1.400" /></svg>
    </div>
  );
}

const CreamButton = ({ label, active, children }) => (
  <button
    aria-label={label}
    className={clsx('flex w-[32px] items-center justify-center border-r border-b-2 border-black', active ? 'bg-[#54b79e]' : 'bg-[#ffffce]')}
  >
    <span className={clsx('border-2 p-[2px]', active ? 'border-t-[#8a8a6e] border-l-[#8a8a6e] border-r-[#e8e8bb] border-b-[#e8e8bb] bg-[#e4e4b8]' : 'border-t-[#e3e3b4] border-l-[#e3e3b4] border-b-[#c9c99c] border-r-[#c9c99c]')}>
      <svg width="20" height="20" viewBox="0 0 20 20" fill="none" stroke="#000">
        <rect x="0.500" y="0.500" width="19" height="19" />
        {children}
      </svg>
    </span>
  </button>
);

function CommandBar() {
  return (
    <div className="flex h-[33px] shrink-0 border-y border-black bg-[#ffffce] pl-[1px] font-bold">
      <CreamButton label="Absolute"><path d="M4 4l11 11M4 8V4h4M15 11v4h-4" /></CreamButton>
      <CreamButton label="Angle"><path d="M4 16L16 3M3 12h14M6 4v5M12 15h5" /></CreamButton>
      <CreamButton label="Snap" active><path d="M3 8l4-4h9v12H3zM9.500 4v12M3 10h13" /></CreamButton>
      <label htmlFor="xy" className="w-[46px] self-center text-[13px] whitespace-nowrap">X Y :</label>
      <div className="flex border-l border-[#2d6b5b] pl-[1px]">
        <input id="xy" className="w-[900px] border-2 border-t-[#8f8f70] border-l-[#8f8f70] border-b-[#a8a883] border-r-[#ffffce] bg-[#ffffce] px-1" />
        <svg width="8" height="16" viewBox="0 0 8 16" className="pointer-events-none -ml-[896px] self-center"><path d="M1 0.500h6M1 15.500h6M4 0v16" stroke="#000" /></svg>
      </div>
      <div className="flex-1" />
      <div className="flex w-[80px] border-l-2 border-black bg-[#54d0b0] py-[1px] pr-[2px] pl-[6px]">
        <button className="flex flex-1 items-center justify-between border-2 border-t-[#a5e9d6] border-l-[#a5e9d6] border-b-[#2d6b5b] border-r-[#2d6b5b] pr-[5px] pl-[4px] text-[15px]">
          Inch
          <span className="h-[7px] w-[12px] border-2 border-t-[#a5e9d6] border-l-[#a5e9d6] border-b-[#2d6b5b] border-r-[#2d6b5b]" />
        </button>
      </div>
    </div>
  );
}

export default function App() {
  return (
    <div className="relative flex h-screen flex-col overflow-hidden bg-black font-['Liberation_Mono',monospace] text-black">
      <header className="flex h-[23px] shrink-0 items-center justify-between bg-white pl-[2px] font-['Open_Sans',sans-serif] text-[13px] text-[#999]">
        <div className="flex items-center gap-[4px]">
          <AppIcon />
          Graphic Editor 9.07b2 (00@HY-HYCAM-PC064 - Windows, pid:15696)
        </div>
        <div className="flex">
          <button aria-label="Minimize" className="flex w-[46px] justify-center"><svg width="11" height="11" viewBox="0 0 11 11"><path d="M0 5.500h10" stroke="#999" /></svg></button>
          <button aria-label="Restore" className="flex w-[46px] justify-center"><svg width="11" height="11" viewBox="0 0 11 11"><path d="M0.500 2.500h7v7h-7zM2.500 2.500v-2h7v7h-2" fill="none" stroke="#999" /></svg></button>
          <button aria-label="Close" className="flex w-[46px] justify-center"><svg width="11" height="11" viewBox="0 0 11 11"><path d="M0.500 0.500l10 10M10.500 0.500l-10 10" stroke="#999" /></svg></button>
        </div>
      </header>

      <div className="flex h-[56px] shrink-0 bg-[#9edcda] font-['Liberation_Serif',serif] font-bold">
        <div className={clsx(sunken, 'flex flex-1')}>
          <nav className={clsx(raised, 'flex flex-1 items-center justify-between pr-[12px] pb-[2px] pl-[12px] text-[14px]')}>
            <div className="flex gap-[18px]">
              {menus.map(([pre, key, post]) => (
                <button key={pre + key + post}>{pre}<u className="underline-offset-4">{key}</u>{post}</button>
              ))}
            </div>
            <button>Help</button>
          </nav>
        </div>
        <div className={clsx(sunken, 'flex w-[414px] items-start pt-[2px] pl-[3px]')}>
          <div className="pt-[8px]"><FrontlineLogo /></div>
          <div className="w-[140px] pl-[2px] text-center">
            <div className="text-[25px] leading-[26px] whitespace-nowrap">Genesis 2000</div>
            <div className="pt-[3px] text-[14px] leading-[18px] italic">Graphic Editor</div>
          </div>
          <div className="flex flex-1 flex-col items-end pr-[2px] font-['Liberation_Mono',monospace] text-[15px] leading-[15px] italic">
            <span className="whitespace-nowrap">12 Jan 2023</span>
            <span className="pr-[12px]">01:51 PM</span>
            <svg width="10" height="10" viewBox="0 0 10 10" className="mt-[6px] mr-[20px]"><path d="M0 0h4v9H0zM6 0h4v9H6z" fill="#f20d0d" /></svg>
          </div>
        </div>
      </div>

      <div className="flex min-h-0 flex-1">
        <LeftPanel />
        <main className="min-w-0 flex-1"><BoardCanvas /></main>
        <RightPanel />
      </div>

      <CommandBar />
      <footer className="flex h-[34px] shrink-0 flex-col border-t-2 border-[#7fa3a2] bg-[#ffffce]">
        <div className="mx-[2px] mt-[1px] h-[28px] border border-black bg-[#adffff] p-[2px]">
          <div className="h-full border-r-2 border-b-2 border-[#6f9a99]" />
        </div>
      </footer>

      <MeasurePopup />
      <Excel />
      <ImeBar />
    </div>
  );
}
